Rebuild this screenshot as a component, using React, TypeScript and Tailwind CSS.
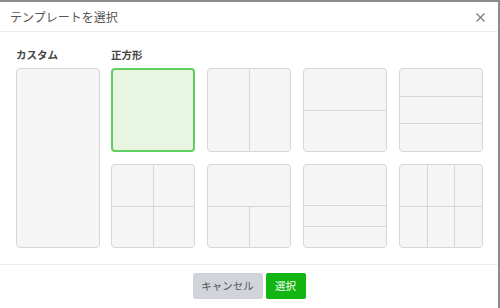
import React from 'react';

const line = 'border-[#d4d6da]';

function Tile({ children, selected = false }: { children?: React.ReactNode; selected?: boolean }) {
  return (
    <div
      className={
        selected
          ? 'w-[84px] h-[84px] rounded-[4px] border-2 border-[#5fd05f] bg-[#e8f5e1] overflow-hidden'
          : 'w-[84px] h-[84px] rounded-[4px] border-[1.5px] border-[#d4d6da] bg-[#f5f5f5] overflow-hidden'
      }
    >
      {children}
    </div>
  );
}

function Cells({ n, dir }: { n: number; dir: 'row' | 'col' }) {
  return (
    <div
      className={
        dir === 'row'
          ? 'flex h-full w-full divide-x-[1.5px] divide-[#d4d6da]'
          : 'flex flex-col h-full w-full divide-y-[1.5px] divide-[#d4d6da]'
      }
    >
      {Array.from({ length: n }).map((_, i) => (
        <div key={i} className="flex-1" />
      ))}
    </div>
  );
}

export default function App() {
  return (
    <div
      className="w-[500px] h-[308px] bg-white border-t-2 border-r-2 border-[#8c8c8c] flex flex-col text-[#555]"
      style={{ fontFamily: '"Noto Sans CJK JP", "Noto Sans", sans-serif' }}
    >
      {/* header */}
      <div className="h-[30px] shrink-0 flex items-center justify-between pl-[10px] pr-[13px] border-b border-[#eeeeee]">
        <span className="text-[12px] text-[#555]">テンプレートを選択</span>
        <svg width="9" height="9" viewBox="0 0 9 9" className="mt-[1px]">
          <path d="M0.5 0.5 L8.5 8.5 M8.5 0.5 L0.5 8.5" stroke="#7a7a7a" strokeWidth="1.2" />
        </svg>
      </div>

      {/* body */}
      <div className="flex gap-[11px] pl-4 pt-[15px] pb-4 border-b border-[#eeeeee]">
        <div className="flex flex-col">
          <div className="h-4 mb-[5px] text-[10.5px] font-bold leading-4 text-[#444]">カスタム</div>
          <div className={`w-[84px] h-[180px] rounded-[4px] border-[1.5px] ${line} bg-[#f5f5f5]`} />
        </div>
        <div className="flex flex-col">
          <div className="h-4 mb-[5px] text-[10.5px] font-bold leading-4 text-[#444]">正方形</div>
          <div className="grid grid-cols-4 gap-3">
            <Tile selected />
            <Tile>
              <Cells n={2} dir="row" />
            </Tile>
            <Tile>
              <Cells n={2} dir="col" />
            </Tile>
            <Tile>
              <Cells n={3} dir="col" />
            </Tile>
            <Tile>
              <div className="flex flex-col h-full divide-y-[1.5px] divide-[#d4d6da]">
                <div className="flex-1 flex">
                  <Cells n={2} dir="row" />
                </div>
                <div className="flex-1 flex">
                  <Cells n={2} dir="row" />
                </div>
              </div>
            </Tile>
            <Tile>
              <div className="flex flex-col h-full divide-y-[1.5px] divide-[#d4d6da]">
                <div className="flex-1" />
                <div className="flex-1 flex">
                  <Cells n={2} dir="row" />
                </div>
              </div>
            </Tile>
            <Tile>
              <div className="flex flex-col h-full divide-y-[1.5px] divide-[#d4d6da]">
                <div className="flex-[2]" />
                <div className="flex-1" />
                <div className="flex-1" />
              </div>
            </Tile>
            <Tile>
              <div className="flex flex-col h-full divide-y-[1.5px] divide-[#d4d6da]">
                <div className="flex-1 flex">
                  <Cells n={3} dir="row" />
                </div>
                <div className="flex-1 flex">
                  <Cells n={3} dir="row" />
                </div>
              </div>
            </Tile>
          </div>
        </div>
      </div>

      {/* footer */}
      <div className="flex justify-center gap-[3px] pt-[8px]">
        <button className="w-[70px] h-[26px] rounded-[2px] bg-[#d1d5db] text-[10.5px] text-[#555]">キャンセル</button>
        <button className="w-[40px] h-[26px] rounded-[2px] bg-[#12b512] text-[10.5px] text-white">選択</button>
      </div>
    </div>
  );
}
